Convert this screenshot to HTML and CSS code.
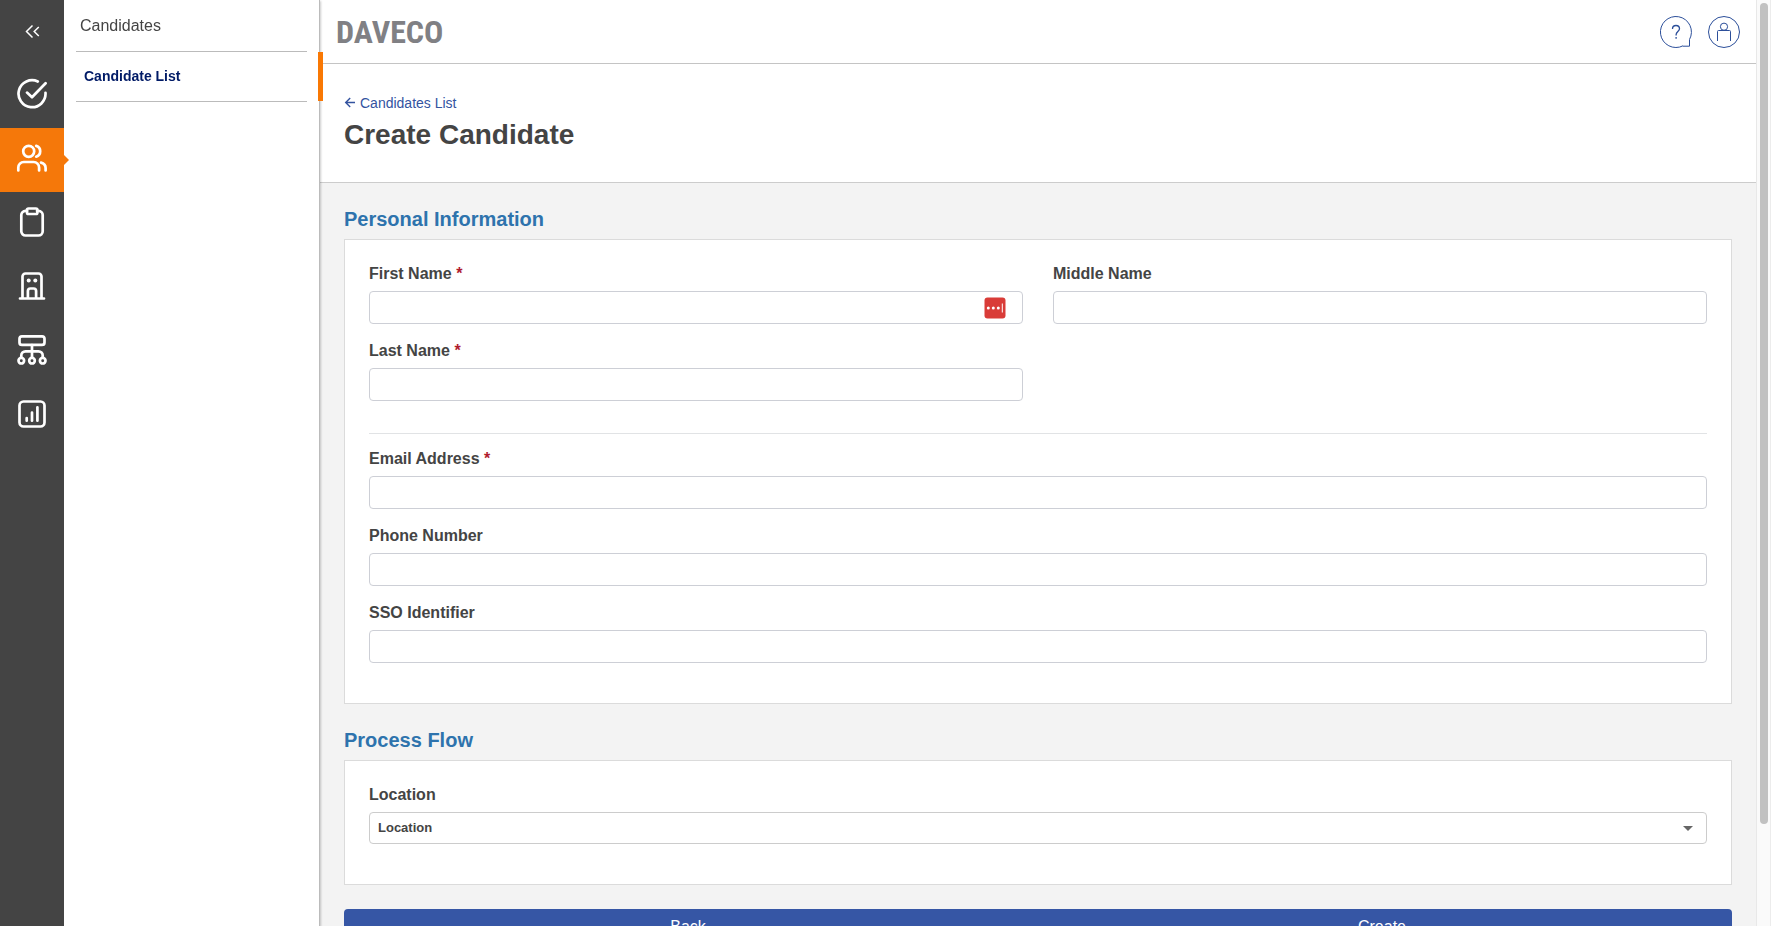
FILE: index.html
```html
<!DOCTYPE html>
<html lang="en">
<head>
<meta charset="utf-8">
<title>Create Candidate</title>
<link rel="stylesheet" href="styles.css">
</head>
<body>
<div class="app">
  <nav class="rail" aria-label="Main">
    <button class="rail-item rail-toggle" type="button" aria-label="Collapse menu">
      <svg class="rail-icon thin" viewBox="0 0 32 32"><path d="M16.500 9.500l-6 6 6 6M22.800 11l-4.600 4.500 4.600 4.500"/></svg>
    </button>
    <a class="rail-item" href="#" aria-label="Tasks">
      <svg class="rail-icon" viewBox="0 0 32 32"><path d="M21.800 3.500A13.500 13.500 0 1 0 29.500 14.800M11 14.600l5 4.600L29.600 5.200"/></svg>
    </a>
    <a class="rail-item active" href="#" aria-label="Candidates">
      <svg class="rail-icon" viewBox="0 0 32 32"><circle cx="12.700" cy="9.300" r="5.500"/><path d="M20.200 3.900c2.600.8 4 2.900 4 5.400s-1.400 4.600-4 5.400M2.300 28.500V25.500a5.500 5.500 0 0 1 5.500-5.500h9.800a5.500 5.500 0 0 1 5.500 5.500v3M25 20.600c2.800.7 4.600 2.700 4.600 5.400v2.500"/></svg>
    </a>
    <a class="rail-item" href="#" aria-label="Forms">
      <svg class="rail-icon" viewBox="0 0 32 32"><path d="M11 4.900H9.500a4.200 4.200 0 0 0-4.200 4.200v16.200a4.200 4.200 0 0 0 4.200 4.200h13a4.200 4.200 0 0 0 4.200-4.200V9.100a4.200 4.200 0 0 0-4.200-4.200H21"/><rect x="11" y="2.500" width="10.400" height="5.500" rx="1.500"/></svg>
    </a>
    <a class="rail-item" href="#" aria-label="Company">
      <svg class="rail-icon" viewBox="0 0 32 32"><path d="M4 28.500h24M6.500 28V6.500a3 3 0 0 1 3-3h13a3 3 0 0 1 3 3V28M11.900 28v-7a2.500 2.500 0 0 1 2.500-2.500h3.200a2.500 2.500 0 0 1 2.500 2.500v7"/><g class="solid"><circle cx="12.700" cy="10.600" r="2"/><circle cx="19.300" cy="10.600" r="2"/></g></svg>
    </a>
    <a class="rail-item" href="#" aria-label="Organization">
      <svg class="rail-icon" viewBox="0 0 32 32"><rect x="3.500" y="2.300" width="25" height="8.600" rx="2.500"/><path d="M16 11v12.500M5.300 23.500v-2a4.200 4.200 0 0 1 4.200-4.200h13a4.200 4.200 0 0 1 4.200 4.200v2"/><circle cx="5.300" cy="26.700" r="2.800"/><circle cx="16" cy="26.700" r="2.800"/><circle cx="26.700" cy="26.700" r="2.800"/></svg>
    </a>
    <a class="rail-item" href="#" aria-label="Reports">
      <svg class="rail-icon" viewBox="0 0 32 32"><rect x="3.500" y="3.500" width="25" height="25" rx="4"/><path d="M10.700 20v2.700M16 14.500v8.200M21.400 9.300v13.400"/></svg>
    </a>
  </nav>

  <aside class="side">
    <h2 class="side-title">Candidates</h2>
    <ul class="side-list">
      <li class="side-row"><a class="side-link" href="#">Candidate List</a></li>
    </ul>
  </aside>

  <main class="page">
    <header class="topbar">
      <span class="logo">DAVECO</span>
      <div class="top-actions">
        <button class="top-button" type="button" aria-label="Help">
          <svg class="top-icon" viewBox="0 0 32 32"><path d="M23 29.800A15.500 15.500 0 1 1 29.500 23.500V30.200H23"/><path class="mark" d="M12.500 13c0-2.300 1.400-3.500 3.500-3.500s3.500 1.200 3.500 3.200c0 2.700-3.400 3-3.400 6v.8M16.100 21v1.800"/></svg>
        </button>
        <button class="top-button" type="button" aria-label="Account">
          <svg class="top-icon" viewBox="0 0 32 32"><circle cx="16" cy="16" r="15.500"/><circle cx="16" cy="10.700" r="3.600"/><path d="M9.500 25v-9.500a1 1 0 0 1 1-1h11a1 1 0 0 1 1 1V25"/></svg>
        </button>
      </div>
    </header>

    <section class="page-head">
      <a class="back-link" href="#">
        <svg class="back-arrow" viewBox="0 0 12 12"><path d="M11 5.500H2M6.200 1L1.700 5.500 6.200 10"/></svg>
        Candidates List
      </a>
      <h1 class="page-title">Create Candidate</h1>
    </section>

    <form class="form">
      <h2 class="section-title">Personal Information</h2>
      <div class="card">
        <div class="name-grid">
          <div class="field">
            <label class="label" for="first">First Name <span class="required">*</span></label>
            <div class="input-wrap">
              <input class="input" id="first" type="text">
              <svg class="fill-badge" viewBox="0 0 22 22"><rect x=".5" y=".5" width="21" height="21" rx="3"/><g class="badge-mark"><circle cx="4.300" cy="11" r="1.500"/><circle cx="9.300" cy="11" r="1.500"/><circle cx="14.300" cy="11" r="1.500"/><rect x="17.800" y="6.500" width="1" height="9"/></g></svg>
            </div>
          </div>
          <div class="field">
            <label class="label" for="middle">Middle Name</label>
            <input class="input" id="middle" type="text">
          </div>
          <div class="field">
            <label class="label" for="last">Last Name <span class="required">*</span></label>
            <input class="input" id="last" type="text">
          </div>
        </div>
        <hr class="divider">
        <div class="stack">
          <div class="field">
            <label class="label" for="email">Email Address <span class="required">*</span></label>
            <input class="input" id="email" type="email">
          </div>
          <div class="field">
            <label class="label" for="phone">Phone Number</label>
            <input class="input" id="phone" type="tel">
          </div>
          <div class="field">
            <label class="label" for="sso">SSO Identifier</label>
            <input class="input" id="sso" type="text">
          </div>
        </div>
      </div>

      <h2 class="section-title">Process Flow</h2>
      <div class="card">
        <div class="field">
          <label class="label" for="location">Location</label>
          <div class="input-wrap">
            <select class="select" id="location"><option>Location</option></select>
            <svg class="caret" viewBox="0 0 10 5"><path d="M0 0h10L5 5z"/></svg>
          </div>
        </div>
      </div>

      <div class="actions">
        <button class="action" type="button">Back</button>
        <button class="action" type="submit">Create</button>
      </div>
    </form>
  </main>

  <div class="scroll-track" aria-hidden="true"><div class="scroll-thumb"></div></div>
</div>
</body>
</html>
```

FILE: styles.css
```css
*,
*::before,
*::after {
  box-sizing: border-box;
}

body {
  margin: 0;
  font-family: "Liberation Sans", Arial, sans-serif;
  font-size: 16px;
  color: #444;
  background: #fff;
}

.app {
  display: flex;
  height: 100vh;
  overflow: hidden;
}

/* Icon rail */
.rail {
  display: flex;
  flex-direction: column;
  flex: none;
  width: 64px;
  background: #444;
}

.rail-item {
  position: relative;
  display: flex;
  align-items: center;
  justify-content: center;
  height: 64px;
  padding: 0 0 4px;
  border: 0;
  background: none;
}

.rail-toggle {
  padding: 0;
}

.rail-item.active {
  background: #f5780a;
}

.rail-item.active::after {
  content: "";
  position: absolute;
  top: 27px;
  left: 100%;
  border: 5px solid transparent;
  border-left-color: #f5780a;
  border-right: 0;
}

.rail-icon {
  width: 32px;
  height: 32px;
  fill: none;
  stroke: #fff;
  stroke-width: 2.700;
  stroke-linecap: round;
  stroke-linejoin: round;
}

.rail-icon.thin {
  stroke-width: 1.500;
  stroke-linecap: butt;
  stroke-linejoin: miter;
}

.rail-icon .solid {
  fill: #fff;
  stroke: none;
}

/* Secondary navigation */
.side {
  position: relative;
  z-index: 1;
  flex: none;
  width: 256px;
  padding: 0 12px;
  border-right: 1px solid #bbb;
  box-shadow: 1px 1px 2px rgba(0, 0, 0, 0.2);
  clip-path: inset(0 -4px 0 0);
}

.side-title {
  margin: 0;
  padding: 14px 4px 13px;
  border-bottom: 1px solid #bbb;
  font-size: 16px;
  font-weight: 400;
  line-height: 24px;
}

.side-list {
  margin: 0;
  padding: 0;
  list-style: none;
}

.side-row {
  border-bottom: 1px solid #bbb;
}

.side-row::after {
  content: "";
  position: absolute;
  right: -4px;
  top: 52px;
  width: 5px;
  height: 49px;
  background: #f97804;
}

.side-link {
  display: block;
  padding: 0 8px;
  font-size: 14px;
  font-weight: 700;
  line-height: 49px;
  color: #001a66;
  text-decoration: none;
}

/* Page */
.page {
  flex: 1;
  min-width: 0;
  overflow: hidden auto;
  scrollbar-width: none;
  background: #f3f3f3;
}

.topbar {
  display: flex;
  align-items: center;
  justify-content: space-between;
  height: 64px;
  padding: 0 16px;
  border-bottom: 1px solid #c4c4c4;
  background: #fff;
}

.logo {
  font-family: "Liberation Sans Narrow", "Roboto Condensed", "Liberation Sans", sans-serif;
  font-size: 32px;
  font-weight: 700;
  line-height: 32px;
  color: #808084;
}

.top-actions {
  display: flex;
  gap: 16px;
}

.top-button {
  display: flex;
  padding: 0;
  border: 0;
  background: none;
}

.top-icon {
  width: 32px;
  height: 32px;
  fill: none;
  stroke: #2c4f9a;
  stroke-width: 1;
}

.top-icon .mark {
  stroke-width: 1.300;
}

.page-head {
  padding: 29px 24px 31px;
  border-bottom: 1px solid #ccc;
  background: #fff;
}

.back-link {
  display: flex;
  align-items: center;
  gap: 4px;
  font-size: 14px;
  line-height: 20px;
  color: #33539f;
  text-decoration: none;
}

.back-arrow {
  width: 12px;
  height: 12px;
  fill: none;
  stroke: #33539f;
  stroke-width: 1.400;
}

.page-title {
  margin: 6px 0 0;
  font-size: 28px;
  line-height: 32px;
}

/* Form */
.form {
  padding: 0 24px;
}

.section-title {
  margin: 24px 0 8px;
  font-size: 20px;
  line-height: 24px;
  color: #2e73ad;
}

.card {
  padding: 24px 24px 40px;
  border: 1px solid #dbdbdb;
  background: #fff;
}

.name-grid {
  display: grid;
  grid-template-columns: 1fr 1fr;
  gap: 17px 30px;
}

.stack {
  display: flex;
  flex-direction: column;
  gap: 17px;
}

.field {
  display: flex;
  flex-direction: column;
  gap: 7px;
}

.label {
  font-weight: 700;
  line-height: 20px;
}

.required {
  color: #b01c2e;
}

.input-wrap {
  position: relative;
  display: flex;
}

.input,
.select {
  width: 100%;
  height: 33px;
  padding: 0 8px;
  border: 1px solid #cdcfd6;
  border-radius: 4px;
  background: #fff;
  font: 700 13px/20px "Liberation Sans", Arial, sans-serif;
  color: #444;
}

.select {
  height: 32px;
  border-color: #ccc;
  appearance: none;
}

.fill-badge {
  position: absolute;
  top: 6px;
  right: 17px;
  width: 22px;
  height: 22px;
  fill: #d93c38;
}

.fill-badge .badge-mark {
  fill: #fff;
}

.caret {
  position: absolute;
  top: 14px;
  right: 14px;
  width: 10px;
  height: 5px;
  fill: #666;
  pointer-events: none;
}

.divider {
  margin: 32px 0 15px;
  border: 0;
  border-top: 1px solid #e1e3e5;
}

.actions {
  display: flex;
  margin: 24px 0;
  border-radius: 4px;
  background: #3656a5;
}

.action {
  flex: 1;
  padding: 8px 6px 8px 0;
  border: 0;
  background: none;
  font: 400 16px/20px "Liberation Sans", Arial, sans-serif;
  color: #fff;
}

/* Scroll indicator */
.scroll-track {
  flex: none;
  width: 15px;
  padding: 3px 2px 0 3px;
  border-left: 1px solid #e8e8e8;
  border-right: 1px solid #ececec;
  background: #fafafa;
}

.scroll-thumb {
  width: 8px;
  height: 89%;
  border-radius: 4px;
  background: #c1c1c1;
}
```
